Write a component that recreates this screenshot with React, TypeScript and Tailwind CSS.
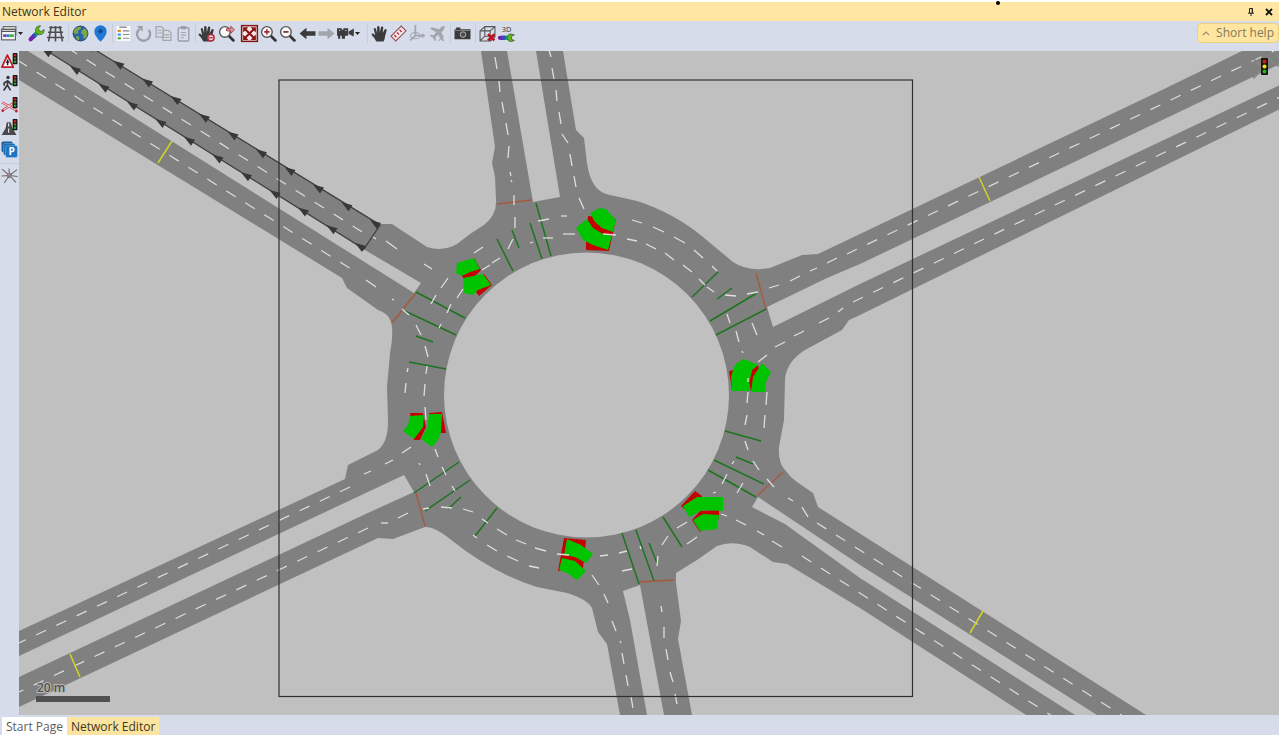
import type { ReactNode } from 'react';
import { clsx } from 'clsx';

type Seg = [number, number, number, number];

// lane markings near and inside the roundabout
const laneMarks: Seg[] = [
  [366, 280, 376, 287], [392, 299, 394, 300], [373, 237, 376, 239], [386, 241, 397, 249], [424, 264, 432, 269],
  [495, 57, 497, 69], [499, 81, 500, 92], [502, 102, 504, 113], [506, 123, 508, 135], [509, 146, 508, 158],
  [510, 172, 511, 176], [511, 180, 512, 182], [514, 195, 514, 205], [515, 217, 515, 228],
  [549, 50, 551, 57], [552, 68, 554, 79], [556, 90, 557, 101], [559, 112, 561, 124], [562, 134, 568, 143],
  [570, 154, 572, 166], [574, 176, 576, 187], [579, 198, 584, 209],
  [725, 295, 736, 296], [747, 294, 758, 292], [769, 288, 779, 285], [790, 281, 800, 276], [810, 271, 817, 268], [827, 263, 837, 258],
  [758, 362, 767, 355], [775, 347, 785, 342], [794, 336, 804, 331], [819, 323, 829, 318], [838, 312, 843, 308],
  [632, 220, 642, 223], [653, 227, 664, 232], [674, 237, 685, 243], [694, 250, 703, 258], [712, 266, 717, 271],
  [603, 234, 616, 235], [627, 239, 637, 241], [646, 244, 656, 249], [665, 253, 674, 260], [683, 265, 692, 272],
  [699, 279, 705, 285], [707, 287, 714, 292], [727, 314, 730, 323], [736, 331, 739, 342], [742, 351, 743, 353], [752, 323, 757, 335],
  [748, 378, 748, 382], [748, 392, 747, 403], [747, 415, 745, 425], [767, 392, 766, 405], [765, 415, 764, 428],
  [538, 221, 549, 219], [561, 216, 567, 216], [543, 238, 553, 238], [563, 234, 575, 234], [530, 243, 533, 242],
  [513, 239, 508, 249], [500, 258, 492, 263], [490, 265, 482, 270], [474, 253, 483, 247], [448, 278, 441, 288], [436, 295, 431, 304],
  [463, 289, 457, 298], [451, 304, 447, 313], [441, 324, 439, 328], [402, 309, 409, 315], [416, 325, 421, 335],
  [425, 346, 428, 357], [427, 366, 426, 374], [425, 384, 424, 396], [408, 368, 407, 372], [406, 383, 405, 393],
  [425, 407, 426, 420], [435, 449, 438, 457], [442, 467, 446, 475], [452, 486, 455, 491], [419, 463, 420, 465], [426, 474, 430, 486],
  [411, 447, 402, 453], [393, 460, 385, 464], [371, 471, 364, 474],
  [408, 513, 398, 518], [388, 523, 381, 523], [423, 509, 429, 508], [441, 507, 452, 508], [463, 509, 473, 512], [482, 519, 488, 523],
  [497, 529, 507, 535], [516, 540, 526, 544], [535, 548, 546, 551], [557, 554, 569, 555], [487, 545, 497, 551], [507, 556, 518, 561],
  [529, 566, 539, 568], [473, 535, 477, 538], [600, 556, 608, 555], [619, 553, 627, 551], [622, 571, 632, 569],
  [592, 575, 599, 585], [604, 594, 608, 603], [612, 621, 616, 631], [620, 641, 621, 643], [622, 653, 624, 664], [626, 675, 628, 686], [631, 697, 633, 708],
  [661, 606, 662, 612], [664, 627, 664, 638], [666, 649, 668, 660], [670, 672, 673, 682], [675, 694, 677, 704],
  [640, 546, 641, 549], [658, 556, 657, 566], [668, 536, 662, 545], [687, 522, 677, 528], [687, 544, 697, 537],
  [721, 514, 727, 516], [736, 520, 746, 525], [757, 531, 764, 535], [772, 541, 782, 547], [713, 493, 716, 492],
  [727, 474, 722, 484], [743, 483, 737, 493], [745, 441, 748, 450], [753, 461, 759, 470], [734, 461, 732, 464],
  [767, 479, 774, 487], [788, 498, 793, 501], [802, 507, 808, 517],
];

// long straight approaches, dashed evenly
const laneDashes = [
  'M17.5 60.2 L351 269',
  'M67.6 48 L364 233',
  'M847 254 L1280 48',
  'M853 302 L1280 97',
  'M350 487 L19 643',
  'M368 528 L19 692',
  'M817 523 L1123 716',
  'M802 556 L1052 716',
];

const detectors: Seg[] = [
  [497, 239, 513, 271], [512, 230, 519, 248], [530, 223, 542, 259], [536, 203, 551, 256],
  [718, 272, 692, 297], [732, 288, 717, 299], [757, 293, 710, 321], [766, 309, 716, 335],
  [416, 292, 465, 318], [405, 311, 456, 335], [416, 336, 433, 342], [409, 362, 446, 369],
  [414, 493, 459, 462], [425, 511, 470, 480], [448, 509, 461, 497], [497, 508, 475, 536],
  [622, 533, 639, 584], [636, 530, 654, 581], [649, 543, 657, 563], [663, 517, 682, 547],
  [725, 431, 761, 441], [736, 457, 753, 464], [714, 460, 764, 484], [708, 470, 756, 497],
];

const stopLines: Seg[] = [
  [497, 204, 532, 200], [392, 323, 416, 293], [756, 273, 766, 309],
  [416, 493, 425, 526], [639, 582, 674, 580], [757, 496, 783, 472],
];

const counters: Seg[] = [
  [172, 141, 158, 163], [979, 177, 990, 201], [70, 654, 80, 677], [983, 611, 970, 633],
];

const conflictRed = [
  '588,216 616,219 609,251 586,250 586,240',
  '729,371 734,370 732,390',
  '758,365 752,370 749,383 751,391 760,373',
  '474,258 481,270 472,279 465,280 461,275',
  '484,274 492,285 479,296 476,292',
  '410,413 423,413 426,427 420,440 414,440',
  '429,413 442,412 446,433 438,433',
  '564,538 586,540 585,550 583,568 558,571',
  '681,506 695,491 702,496 690,513',
  '692,520 700,511 719,510 719,517 700,532',
];

const conflictGreen = [
  '590,213 600,208 606,209 616,220 613,232 602,228 595,222',
  '576,228 587,219 593,228 603,234 612,236 608,250 593,245 583,240',
  '734,367 737,363 744,359 758,365 752,370 749,382 750,391 732,391 731,377',
  '762,363 771,372 766,382 765,392 751,392 753,377',
  '456,273 457,263 474,258 480,269 470,272 462,276',
  '463,278 483,274 491,285 478,290 473,295 464,293',
  '410,416 424,415 423,427 414,439 403,431 408,425',
  '429,414 442,414 441,432 438,440 432,447 421,439 427,428',
  '567,539 581,545 593,554 586,563 575,557 564,555',
  '562,558 575,561 586,571 577,580 567,573 559,570',
  '683,506 697,497 723,497 723,511 703,510 689,517',
  '693,520 703,514 719,515 717,529 700,531',
];

const carriageway =
  'M97 51 L380 224 L392 224 L427 247 Q443 252 457 244 L470 234 L484 225 Q497 215 496 200 L495 177 L492 163 L495 147 L481 51' +
  ' L563 51 L576 130 L584 138 L587 163 Q591 192 610 195 L637 201 Q674 213 703 237 L733 262 Q748 272 770 268 L802 255 L818 254' +
  ' L1162 90 L1242 51 L1280 51 L1280 109 L860 315 L849 320 L842 330 L805 350 Q786 362 785 380 L784 420 L779 447' +
  ' Q778 463 785 470 Q790 477 797 482 L813 493 L818 507 L1146 715 L1026 715 L860 608 L787 564 L773 562 L750 547 Q733 540 717 546' +
  ' L697 560 L676 573 L676 583 L681 621 L678 639 L692 715 L620 715 L607 644 L598 632 L592 608 Q587 599 567 593 L537 587' +
  ' Q492 573 450 539 Q434 526 425 527 L393 539 L378 538 L19 707 L19 631 L345 479 L348 465 L378 450 Q388 442 388 422 L387 387 L390 353' +
  ' Q394 332 391 322 Q388 313 378 310 L347 288 L342 278 L19 80 L19 51 Z';

const medians =
  'M28 51 L47 51 L365 250 L421 283 L414 293 Z M507 51 L533 202 L560 197 L536 51 Z M1280 64 L860 264 L827 278 L767 307 L773 327 L860 284 L1280 85 Z' +
  ' M752 507 L758 497 L860 565 L1097 715 L1075 715 L860 578 L785 524 Z M640 585 L664 715 L647 715 L630 620 L623 591 Z M19 656 L404 475 L414 492 L370 512 L19 677 Z';

const Lines = ({ items, stroke, width }: { items: Seg[]; stroke: string; width: number }) => (
  <g stroke={stroke} strokeWidth={width}>
    {items.map(([x1, y1, x2, y2]) => (
      <line key={`${x1}-${y1}-${x2}`} x1={x1} y1={y1} x2={x2} y2={y2} />
    ))}
  </g>
);

const ArrowChain = ({ x, y, count }: { x: number; y: number; count: number }) => (
  <>
    {Array.from({ length: count }, (_, i) => (
      <path key={i} d="M-9 -6 L2 -3 L-2 3 Z" transform={`translate(${x - i * 28.5} ${y - i * 17.7})`} fill="#383838" />
    ))}
  </>
);

const NetworkMap = () => (
  <svg viewBox="19 51 1260 664" className="block h-auto w-full bg-[#c0c0c0]" role="img" aria-label="Roundabout network">
    <path d={carriageway} fill="#808080" />
    <path d={medians} fill="#c0c0c0" />
    <circle cx="586.5" cy="395" r="142.5" fill="#c0c0c0" />

    <path d="M97 51 L380 225 L364 249 L47 51" fill="none" stroke="#404040" strokeWidth="1.3" />
    <ArrowChain x={379} y={226} count={11} />
    <ArrowChain x={364} y={249} count={12} />

    <g fill="none" stroke="#dcdcdc" strokeWidth="1.2" strokeDasharray="11 11.4">
      {laneDashes.map((d) => (
        <path key={d} d={d} />
      ))}
    </g>
    <Lines items={stopLines} stroke="#a8583a" width={1.4} />
    <Lines items={detectors} stroke="#1c741f" width={1.5} />
    <Lines items={counters} stroke="#d3d326" width={1.5} />

    {conflictRed.map((points) => (
      <polygon key={points} points={points} fill="#c60000" />
    ))}
    {conflictGreen.map((points) => (
      <polygon key={points} points={points} fill="#00c400" />
    ))}
    <Lines items={laneMarks} stroke="#dedede" width={1.3} />

    <rect x="279" y="80" width="633.5" height="616.5" fill="none" stroke="#303030" strokeWidth="1.2" />

    <path d="M1253 78 L1263 68 M1254 60 L1262 66 M1268 58 L1279 66 M1274 52 L1279 58" stroke="#858585" strokeWidth="2.5" />
    <rect x="1261" y="58" width="7" height="17" rx="1" fill="#16180c" />
    <circle cx="1264.5" cy="61.5" r="2" fill="#d01818" />
    <circle cx="1264.5" cy="66.5" r="2" fill="#f2e21c" />
    <circle cx="1264.5" cy="71.5" r="2" fill="#22b422" />

    <text
      x="37"
      y="692"
      fontSize="12"
      fontWeight="600"
      fill="#505050"
      stroke="#b8b8b8"
      strokeWidth="2"
      paintOrder="stroke"
      fontFamily="'Open Sans', sans-serif"
    >
      20 m
    </text>
    <rect x="36" y="696" width="74" height="6" fill="#505050" />
  </svg>
);

const Icon = ({ children }: { children: ReactNode }) => (
  <svg viewBox="0 0 16 16" className="block size-[17px] shrink-0 overflow-visible" fill="none" aria-hidden="true">
    {children}
  </svg>
);

const ToolButton = ({ label, caret, children }: { label: string; caret?: boolean; children: ReactNode }) => (
  <button
    type="button"
    aria-label={label}
    className={clsx('flex h-5 items-center', caret ? 'w-[27px] gap-px' : 'w-[19px] justify-center')}
  >
    <Icon>{children}</Icon>
    {caret && (
      <svg viewBox="0 0 5 3" className="h-[3px] w-[5px]" aria-hidden="true">
        <path d="M0 0h5L2.5 3z" fill="#222" />
      </svg>
    )}
  </button>
);

const Separator = ({ wide }: { wide?: boolean }) => (
  <span className={clsx('flex h-5 shrink-0 justify-center', wide ? 'w-1.5' : 'w-1')}>
    <span className="w-px bg-[#c6cddb]" />
  </span>
);

const Hand = () => (
  <path
    d="M5 15.5 Q3.5 12 .6 9.3 Q.4 7.6 2 8 L4 9.6 L2.6 3.8 Q3 2.2 4.5 3.3 L5.8 7.5 L5.7 1.6 Q6.8 .2 8 1.6 L8.3 7 L9.5 1.7 Q10.8 .8 11.6 2.2 L11 7.6 L13 4 Q14.4 3.4 14.8 4.8 L13.4 10 Q13 13 11.8 15.5 Z"
    fill="#3b3b3b"
  />
);

const Magnifier = ({ children }: { children?: ReactNode }) => (
  <>
    <path d="M10 10 L14.5 14.5" stroke="#333" strokeWidth="2.6" strokeLinecap="round" />
    <circle cx="6.5" cy="6.5" r="5" fill="#fafafa" stroke="#555" strokeWidth="1.3" />
    {children}
  </>
);

const Signal = () => (
  <>
    <rect x="11" y="0" width="4.5" height="10.5" rx=".6" fill="#161616" />
    <circle cx="13.2" cy="2.2" r="1.2" fill="#d02020" />
    <circle cx="13.2" cy="5.2" r="1.1" fill="#77701a" />
    <circle cx="13.2" cy="8.2" r="1.2" fill="#1faa3b" />
  </>
);

const Wrench = () => (
  <>
    <path d="M2.5 13.5 L5.8 10.2" stroke="#7a1fa8" strokeWidth="4" strokeLinecap="round" />
    <path d="M5 11 L7.5 8.5" stroke="#2b4fc4" strokeWidth="4" />
    <path d="M7 9 L9 7" stroke="#1e9e6a" strokeWidth="4" />
    <path d="M15.2 4.2 L12.5 6 L10.4 5.2 L10 3 L12 .8 Q8.5 .2 7.2 3.2 Q6.5 8 10.5 9.2 Q15.6 9 15.2 4.2Z" fill="#62b51b" stroke="#35552c" strokeWidth=".6" />
  </>
);

const Toolbar = () => (
  <div role="toolbar" aria-label="Network editor tools" className="flex h-[30px] items-center bg-[#d6dce9] pb-1.5">
    <ToolButton label="Network objects" caret>
      <rect x="3" y="1.5" width="12" height="8" fill="#ddd" stroke="#666" />
      <rect x="1.5" y="4" width="13" height="10" fill="#f4f4f4" stroke="#555" />
      <path d="M1.5 4.5h13M1.5 6.2h13" stroke="#555" />
      <path d="M3 10h3" stroke="#7b2fb0" strokeWidth="2.4" />
      <path d="M6 10h3" stroke="#2f6fd0" strokeWidth="2.4" />
      <path d="M9 10h4" stroke="#35ad3d" strokeWidth="2.4" />
    </ToolButton>
    <ToolButton label="Graphic parameters">
      <Wrench />
    </ToolButton>
    <ToolButton label="Wireframe">
      <path d="M4 1 L1.5 15.5 M8 1 V15.5 M12 1 L14.5 15.5 M2 2.3h12 M1 6.8h14 M0 11.8h16" stroke="#4c4c4c" strokeWidth="1.5" />
    </ToolButton>
    <Separator wide />
    <div className="flex gap-px">
      <ToolButton label="Background map">
        <circle cx="8" cy="8" r="7.2" fill="#2b62ae" />
        <path d="M2 4 Q5 .6 8.5 1.6 L8 4 L5.5 5.5 L6 8 L3 8.5 L1 7Z M9 5.5 L12 3 L15 6.5 L14.6 10 L12.5 13 L10.5 12 L10.6 9 L8.5 8Z M4 10 L6.8 11 L6.5 14.6 L4 13.2Z" fill="#78a84a" />
        <circle cx="8" cy="8" r="7" stroke="#31435f" strokeWidth=".7" />
      </ToolButton>
      <ToolButton label="Map location">
        <path d="M8 15.8 Q2.2 9.8 2.2 6 A5.8 5.8 0 0 1 13.8 6 Q13.8 9.8 8 15.8Z" fill="#1f78d6" />
        <circle cx="8" cy="5.8" r="2" fill="#15478c" />
      </ToolButton>
    </div>
    <Separator />
    <div className="flex gap-px">
      <ToolButton label="Legend">
        <path d="M1.5 1h13v14h-13z" fill="#fbfbfb" />
        <path d="M4 2h7" stroke="#666" />
        <path d="M2.5 5.5h3" stroke="#e08020" strokeWidth="2" />
        <path d="M2.5 9h3" stroke="#2d9ae0" strokeWidth="2" />
        <path d="M2.5 12.5h3" stroke="#49ad2e" strokeWidth="2" />
        <path d="M7.5 5.5h6M7.5 9h6M7.5 12.5h6" stroke="#8a8a8a" />
      </ToolButton>
      <ToolButton label="Refresh">
        <path d="M4.2 3.8 A6.2 6.2 0 1 0 12.8 4.6" stroke="#9b9fa8" strokeWidth="2.2" />
        <path d="M1.8 1h5.4v5.4z" fill="#9b9fa8" />
      </ToolButton>
      <ToolButton label="Copy">
        <path d="M1 1.5h5l2 2v8H1z M7.5 5h5l2.5 2v7.5H7.5z" fill="#d9dce3" stroke="#a3a7af" strokeWidth="1.2" />
        <path d="M2.5 5h4M2.5 7.5h4M9 9.3h4.5M9 11.8h4.5" stroke="#a3a7af" />
      </ToolButton>
      <ToolButton label="Paste">
        <rect x="3" y="2.5" width="10" height="12.5" rx="1" stroke="#9b9fa8" strokeWidth="1.3" />
        <path d="M5.5 1h5v3h-5z" fill="#9b9fa8" />
        <path d="M5.5 7h5M5.5 9.5h5M5.5 12h3" stroke="#a3a7af" />
      </ToolButton>
    </div>
    <Separator />
    <div className="flex gap-px">
      <ToolButton label="Lock view">
        <Hand />
        <circle cx="12.2" cy="12" r="3" fill="#e9dede" stroke="#b02a36" strokeWidth="1.4" />
        <path d="M10.4 12h3.6" stroke="#b02a36" strokeWidth="1.2" />
      </ToolButton>
      <ToolButton label="Previous zoom">
        <Magnifier />
        <path d="M8 3.5h4V1.2l3.5 3.3L12 7.8V5.5H8z" fill="#d9a4a8" stroke="#a82a34" strokeWidth=".8" />
      </ToolButton>
    </div>
    <span className="w-1" />
    <ToolButton label="Show entire network">
      <rect x=".6" y=".6" width="14.8" height="14.8" fill="#f6e9e9" stroke="#7d1717" strokeWidth="1.4" />
      <path d="M3 3l10 10M13 3L3 13" stroke="#8c1515" strokeWidth="2" />
      <path d="M2 2h5L2 7z M14 2v5L9 2z M2 14V9L7 14z M14 14H9L14 9z" fill="#8c1515" />
    </ToolButton>
    <ToolButton label="Zoom in">
      <Magnifier>
        <path d="M4 6.5h5M6.5 4v5" stroke="#a82430" strokeWidth="1.5" />
      </Magnifier>
    </ToolButton>
    <ToolButton label="Zoom out">
      <Magnifier>
        <path d="M4 6.5h5" stroke="#6c2430" strokeWidth="1.5" />
      </Magnifier>
    </ToolButton>
    <span className="w-px" />
    <ToolButton label="Back">
      <path d="M.5 8 L7 2.6 V5.8 H15.5 V10.2 H7 V13.4Z" fill="#3b3b3b" />
    </ToolButton>
    <ToolButton label="Forward">
      <path d="M15.5 8 L9 2.6 V5.8 H.5 V10.2 H9 V13.4Z" fill="#a2a5ac" />
    </ToolButton>
    <span className="w-px" />
    <ToolButton label="Camera positions" caret>
      <path d="M0 3h4.5v1.5H6V3h4.5v7H7.5v3h-3v-3H3v3H1v-3H0z M11 6l4.8-2.6v7.4L11 8.4z" fill="#3b3b3b" />
      <path d="M2 5.2h1M7.8 5.2h1" stroke="#ddd" />
    </ToolButton>
    <Separator wide />
    <ToolButton label="Pan">
      <Hand />
    </ToolButton>
    <ToolButton label="Measure">
      <path d="M1 10.5 L10.5 1 L15 5.5 L5.5 15Z" fill="#f7eaea" stroke="#8a5058" />
      <path d="M4 9.5 L6 11.5 M6.5 7 L8.5 9 M9 4.5 L11 6.5" stroke="#c22c38" strokeWidth="1.3" />
    </ToolButton>
    <ToolButton label="Rotate 3D">
      <path d="M6 0v10M6 10L1 14.5M6 10h8" stroke="#a2a5ac" strokeWidth="1.6" />
      <path d="M12 7.5l3.5 2.5-3.5 2.5z" fill="#a2a5ac" />
      <ellipse cx="6" cy="10" rx="4.5" ry="3" stroke="#a2a5ac" />
    </ToolButton>
    <span className="w-px" />
    <ToolButton label="Flight">
      <path d="M15 1 Q13 .5 11.5 2 L9.5 4 L2.5 2.2 L1 3.6 L6.8 6.8 L4.5 9.6 L1.6 9.2 L.6 10.2 L3.8 12 L5.6 15.4 L6.6 14.4 L6.2 11.4 L9 9 L12.4 15 L13.8 13.5 L11.8 6.5 L14 4.2Z" fill="#a2a5ac" />
      <path d="M9 10l5 5M14 10l-5 5" stroke="#a2a5ac" />
    </ToolButton>
    <Separator wide />
    <ToolButton label="Screenshot">
      <path d="M.5 4h15v9.5H.5z M2 2.4h4V4H2z" fill="#3b3b3b" />
      <path d="M1 5.2h14" stroke="#999" strokeWidth=".7" />
      <circle cx="8.5" cy="9" r="2.6" fill="#4a4a4a" stroke="#bbb" strokeWidth=".9" />
    </ToolButton>
    <Separator wide />
    <ToolButton label="Discard 3D model">
      <path d="M1 5.5 L5.5 1.5 H15 V11 L11 15 H1Z M1 5.5H10.5V15M10.5 5.5L15 1.5M5.5 1.5V10.5H15M5.5 10.5L1 15" stroke="#555" />
      <path d="M8.5 8.5l6 6M14.5 8.5l-6 6" stroke="#c01020" strokeWidth="2.3" />
    </ToolButton>
    <ToolButton label="3D graphic parameters">
      <text x="3.5" y="7" fontSize="7" fill="#333">3D</text>
      <path d="M1.8 12h3" stroke="#7a1fa8" strokeWidth="4" strokeLinecap="round" />
      <path d="M4 12h3.5" stroke="#2b4fc4" strokeWidth="4" />
      <path d="M7 12h2.5" stroke="#1e9e6a" strokeWidth="4" />
      <path d="M15.4 9.4 L12.6 10.6 V13.4 L15.4 14.6 Q9.4 17.4 8.6 12 Q9.4 6.6 15.4 9.4Z" fill="#62b51b" stroke="#35552c" strokeWidth=".7" />
    </ToolButton>
    <button
      type="button"
      className="ml-auto flex h-5 items-center gap-1.5 rounded-sm border border-[#edcf7e] bg-[#fee5a0] px-1 text-xs leading-4 text-[#85795a]"
    >
      <svg viewBox="0 0 8 5" className="h-[5px] w-2" fill="none" aria-hidden="true">
        <path d="M.8 4.2 4 1l3.2 3.2" stroke="#9a8d68" strokeWidth="1.2" />
      </svg>
      Short help
    </button>
  </div>
);

const SideButton = ({ label, children }: { label: string; children: ReactNode }) => (
  <button type="button" aria-label={label} className="flex h-[22px] w-full items-start justify-center pt-0.5">
    <Icon>{children}</Icon>
  </button>
);

const Sidebar = () => (
  <div role="toolbar" aria-label="Junction tools" aria-orientation="vertical" className="w-[19px] shrink-0 bg-[#d6dce9]">
    <SideButton label="Priority signals">
      <path d="M6 2 L11.6 13.3 H.9Z" fill="#fff" stroke="#c01c28" strokeWidth="1.7" strokeLinejoin="round" />
      <path d="M6.2 6v5.6M4.8 8.6h2.8" stroke="#222" strokeWidth="1.4" />
      <Signal />
    </SideButton>
    <SideButton label="Pedestrian signals">
      <circle cx="6.6" cy="2.4" r="1.6" fill="#333" />
      <path d="M6.5 5 L6 9.5 L9 14.5 M6 9.5 L2.5 14.5 M6.5 5.5 L3 7.5 V10 M6.8 5.6 L9 8.5 L11 9" stroke="#3a3a3a" strokeWidth="1.6" />
      <Signal />
    </SideButton>
    <SideButton label="Railroad crossing">
      <path d="M1 5 L15 13 M1 13 L13 5" stroke="#d04450" strokeWidth="2.3" />
      <path d="M1 5 L15 13 M1 13 L13 5" stroke="#fff" strokeWidth=".8" />
      <circle cx="1.6" cy="13" r="1.2" fill="#c01c28" />
      <circle cx="14.4" cy="13.4" r="1.2" fill="#c01c28" />
      <Signal />
    </SideButton>
    <SideButton label="Ramp metering">
      <path d="M5.5 3h3.5l2 6 3.6 6H.6l3.6-6z" fill="#4a4a4a" />
      <path d="M1 8l3.5-1.5M7.2 4v3M7.2 9v4" stroke="#e8e8e8" strokeWidth="1.1" />
      <Signal />
    </SideButton>
    <SideButton label="Parking">
      <rect x=".5" y=".5" width="10.5" height="10" rx="1.5" fill="#175e9e" />
      <rect x="2.3" y="2.3" width="11" height="11" rx="1.5" fill="#1b6cb4" stroke="#cfe0f0" strokeWidth=".3" />
      <rect x="4.3" y="4.3" width="11.2" height="11.2" rx="1.5" fill="#1c76c6" stroke="#cfe0f0" strokeWidth=".3" />
      <text x="7" y="13.3" fontSize="9.5" fontWeight="700" fill="#fff">P</text>
    </SideButton>
    <div className="flex h-1 items-center">
      <span className="h-px w-full bg-[#c3cad8]" />
    </div>
    <SideButton label="Nodes">
      <path d="M1 2 L8 8 L15 2.5 M.5 8.5 L8 8 L15.5 9 M3 15 L8 8 L14 14.5 M8 8 L7.5 1.5" stroke="#6b6b6b" />
      <circle cx="8" cy="8" r="2.4" fill="#777" />
      <path d="M6.8 6.5l2.6 3" stroke="#c9909a" />
    </SideButton>
  </div>
);

const App = () => (
  <div className="flex min-h-screen flex-col bg-white pr-px font-['Open_Sans','Noto_Sans',sans-serif] text-xs">
    <header className="relative mt-0.5 flex h-[19px] items-center bg-[#ffe6a2] px-0.5 text-[#3d3623]">
      <h1 className="leading-4">Network Editor</h1>
      <div className="ml-auto flex gap-0.5">
        <button type="button" aria-label="Pin panel" className="flex size-4 items-center justify-center">
          <svg viewBox="0 0 8 10" className="h-[10px] w-2" fill="none" aria-hidden="true">
            <path d="M2.5 6V1.5h3V6M1 6.2h6M4 6v3" stroke="#222" />
            <path d="M5.2 1.5V6" stroke="#222" />
          </svg>
        </button>
        <button type="button" aria-label="Close panel" className="flex size-4 items-center justify-center">
          <svg viewBox="0 0 8 8" className="size-2" fill="none" aria-hidden="true">
            <path d="M1 1l6 6M7 1L1 7" stroke="#111" strokeWidth="1.8" />
          </svg>
        </button>
      </div>
      <span className="absolute top-0 left-[78%] -mt-px size-1 -translate-x-1/2 rounded-full bg-black" />
    </header>
    <Toolbar />
    <main className="flex flex-1">
      <Sidebar />
      <div className="min-w-0 flex-1 bg-[#c0c0c0]">
        <NetworkMap />
      </div>
    </main>
    <nav aria-label="Documents" className="flex h-5 bg-[#d6dce9] pl-0.5">
      <a href="#start" className="mt-0.5 bg-white px-1 leading-5 text-[#5c5c5c]">
        Start Page
      </a>
      <a href="#network" aria-current="page" className="mt-0.5 bg-[#fbe4a0] px-1 leading-5 text-[#3d3623]">
        Network Editor
      </a>
    </nav>
  </div>
);

export default App;
